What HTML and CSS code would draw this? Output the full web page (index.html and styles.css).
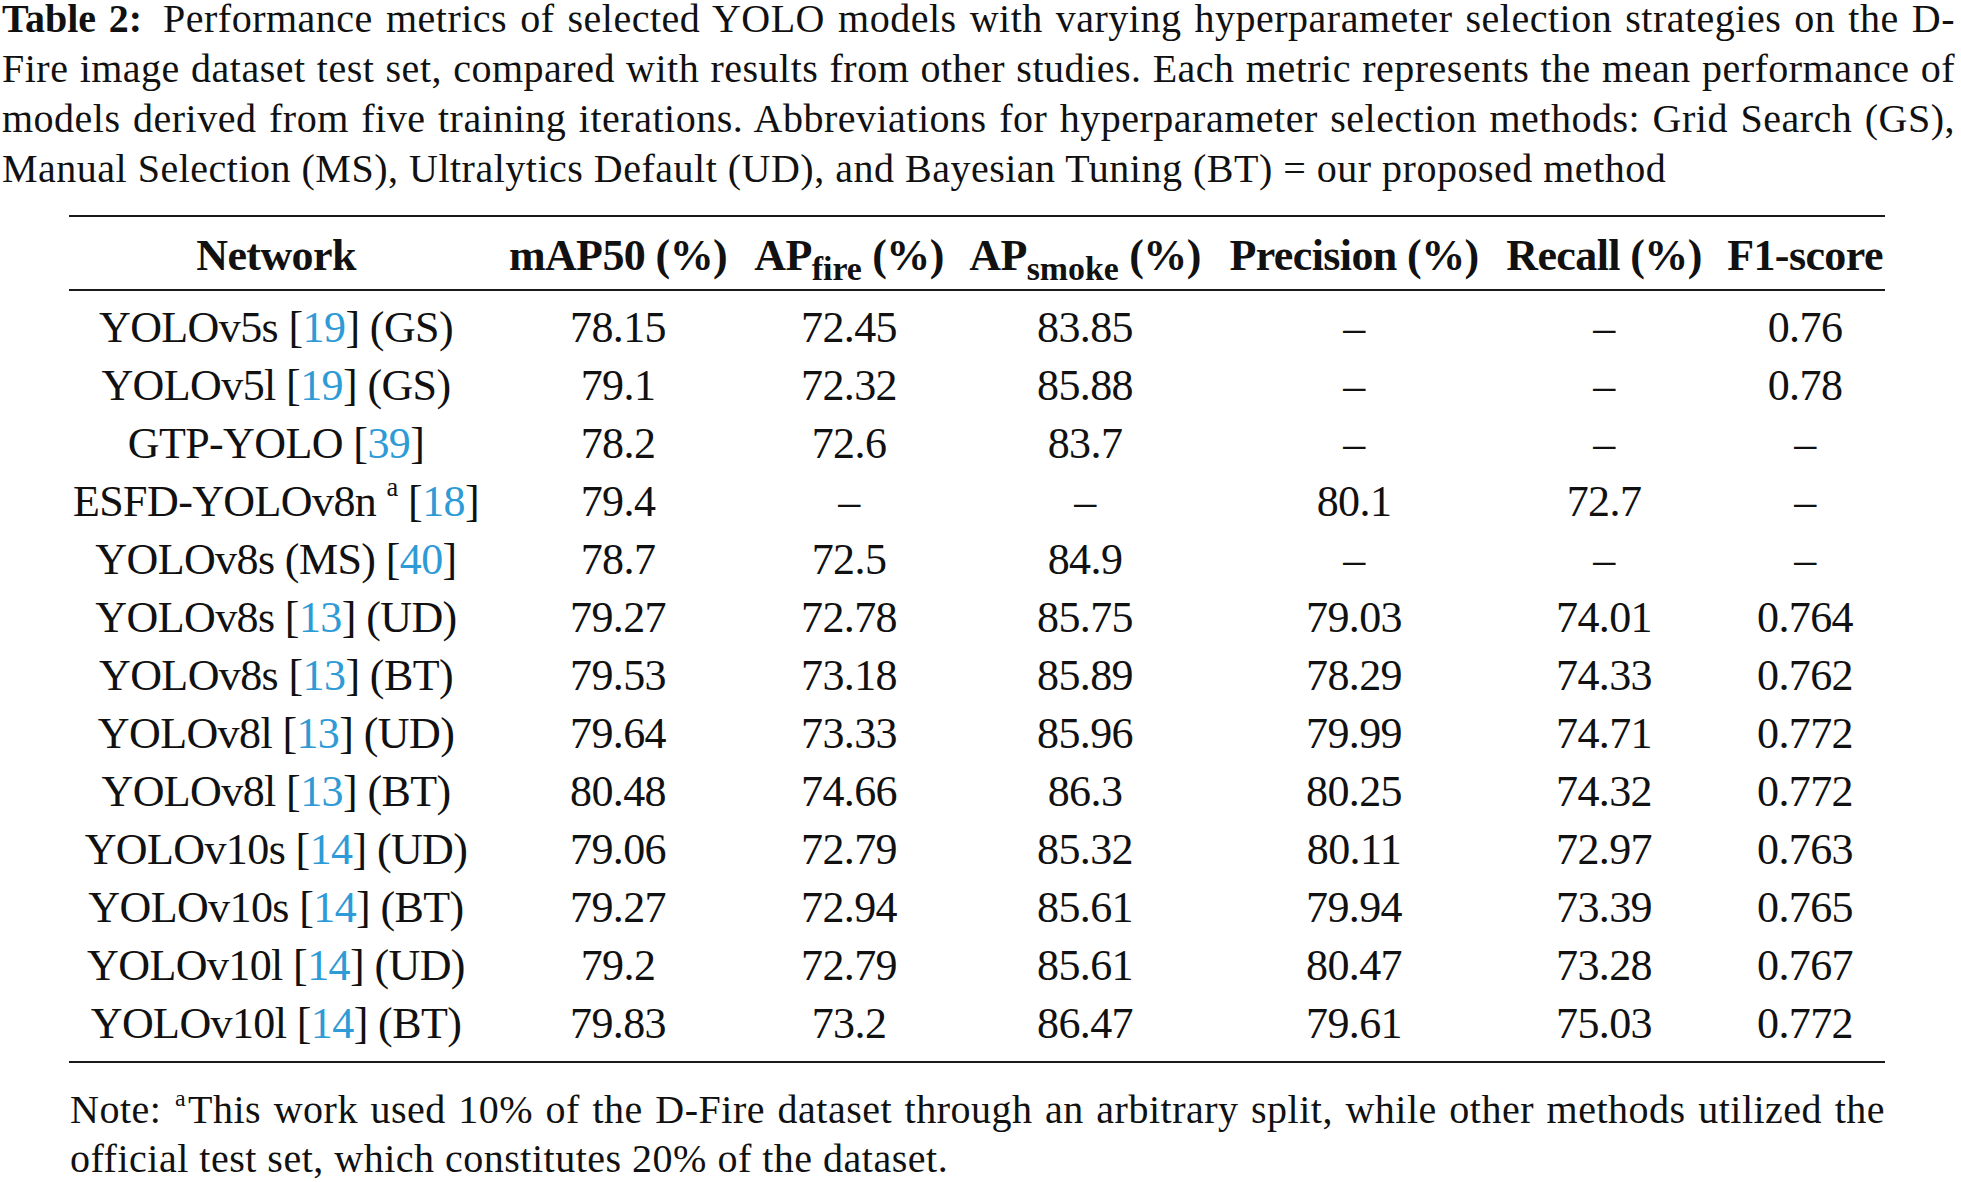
FILE: index.html
```html
<!DOCTYPE html>
<html lang="en">
<head>
<meta charset="utf-8">
<title>Table 2</title>
<link rel="stylesheet" href="styles.css">
</head>
<body>
<div class="page">
  <div class="caption">
    <span class="cap-line first"><b class="label">Table 2:</b> Performance metrics of selected YOLO models with varying hyperparameter selection strategies on the D-</span>
    <span class="cap-line">Fire image dataset test set, compared with results from other studies. Each metric represents the mean performance of</span>
    <span class="cap-line">models derived from five training iterations. Abbreviations for hyperparameter selection methods: Grid Search (GS),</span>
    <span class="cap-line last">Manual Selection (MS), Ultralytics Default (UD), and Bayesian Tuning (BT) = our proposed method</span>
  </div>

  <div class="table-wrap">
    <table class="metrics">
      <colgroup>
        <col class="c-net">
        <col class="c-map">
        <col class="c-fire">
        <col class="c-smoke">
        <col class="c-prec">
        <col class="c-rec">
        <col class="c-f1">
      </colgroup>
      <thead>
        <tr>
          <th>Network</th>
          <th>mAP50 (%)</th>
          <th>AP<sub>fire</sub> (%)</th>
          <th>AP<sub>smoke</sub> (%)</th>
          <th>Precision (%)</th>
          <th>Recall (%)</th>
          <th>F1-score</th>
        </tr>
      </thead>
      <tbody>
        <tr><td>YOLOv5s [<a class="ref">19</a>] (GS)</td><td>78.15</td><td>72.45</td><td>83.85</td><td>–</td><td>–</td><td>0.76</td></tr>
        <tr><td>YOLOv5l [<a class="ref">19</a>] (GS)</td><td>79.1</td><td>72.32</td><td>85.88</td><td>–</td><td>–</td><td>0.78</td></tr>
        <tr><td>GTP-YOLO [<a class="ref">39</a>]</td><td>78.2</td><td>72.6</td><td>83.7</td><td>–</td><td>–</td><td>–</td></tr>
        <tr><td>ESFD-YOLOv8n <sup class="fn">a</sup> [<a class="ref">18</a>]</td><td>79.4</td><td>–</td><td>–</td><td>80.1</td><td>72.7</td><td>–</td></tr>
        <tr><td>YOLOv8s (MS) [<a class="ref">40</a>]</td><td>78.7</td><td>72.5</td><td>84.9</td><td>–</td><td>–</td><td>–</td></tr>
        <tr><td>YOLOv8s [<a class="ref">13</a>] (UD)</td><td>79.27</td><td>72.78</td><td>85.75</td><td>79.03</td><td>74.01</td><td>0.764</td></tr>
        <tr><td>YOLOv8s [<a class="ref">13</a>] (BT)</td><td>79.53</td><td>73.18</td><td>85.89</td><td>78.29</td><td>74.33</td><td>0.762</td></tr>
        <tr><td>YOLOv8l [<a class="ref">13</a>] (UD)</td><td>79.64</td><td>73.33</td><td>85.96</td><td>79.99</td><td>74.71</td><td>0.772</td></tr>
        <tr><td>YOLOv8l [<a class="ref">13</a>] (BT)</td><td>80.48</td><td>74.66</td><td>86.3</td><td>80.25</td><td>74.32</td><td>0.772</td></tr>
        <tr><td>YOLOv10s [<a class="ref">14</a>] (UD)</td><td>79.06</td><td>72.79</td><td>85.32</td><td>80.11</td><td>72.97</td><td>0.763</td></tr>
        <tr><td>YOLOv10s [<a class="ref">14</a>] (BT)</td><td>79.27</td><td>72.94</td><td>85.61</td><td>79.94</td><td>73.39</td><td>0.765</td></tr>
        <tr><td>YOLOv10l [<a class="ref">14</a>] (UD)</td><td>79.2</td><td>72.79</td><td>85.61</td><td>80.47</td><td>73.28</td><td>0.767</td></tr>
        <tr><td>YOLOv10l [<a class="ref">14</a>] (BT)</td><td>79.83</td><td>73.2</td><td>86.47</td><td>79.61</td><td>75.03</td><td>0.772</td></tr>
      </tbody>
    </table>

    <p class="note">Note: <sup class="fn-note">a</sup>This work used 10% of the D-Fire dataset through an arbitrary split, while other methods utilized the official test set, which constitutes 20% of the dataset.</p>
  </div>
</div>
</body>
</html>
```

FILE: styles.css
```css
html, body {
  margin: 0;
  padding: 0;
  background: #ffffff;
}

body {
  font-family: "Liberation Serif", "Times New Roman", serif;
  color: #111111;
}

.page {
  width: 1961px;
  height: 1182px;
  overflow: hidden;
}

/* ---------- caption ---------- */
.caption {
  margin: 0 6px 0 2px;
  font-size: 40px;
  line-height: 50px;
  letter-spacing: 0.5px;
}

.cap-line {
  display: block;
  text-align: justify;
  text-align-last: justify;
  white-space: nowrap;
}

.cap-line.first {
  line-height: 38px;
  margin-bottom: 6px;
}

.cap-line.last {
  text-align: left;
  text-align-last: left;
}

.label {
  font-weight: 700;
  letter-spacing: 0;
  margin-right: 8px;
}

/* ---------- table ---------- */
.table-wrap {
  margin: 21px 0 0 69px;
  width: 1816px;
}

.metrics {
  width: 1816px;
  table-layout: fixed;
  border-collapse: collapse;
  font-size: 44px;
  line-height: 58px;
  letter-spacing: -0.6px;
}

.c-net   { width: 414px; }
.c-map   { width: 270px; }
.c-fire  { width: 192px; }
.c-smoke { width: 280px; }
.c-prec  { width: 258px; }
.c-rec   { width: 242px; }
.c-f1    { width: 160px; }

.metrics th,
.metrics td {
  padding: 0;
  text-align: center;
  white-space: nowrap;
  vertical-align: baseline;
}

.metrics thead th {
  font-weight: 700;
  padding-top: 10px;
  padding-bottom: 4px;
  border-top: 2px solid #1a1a1a;
  border-bottom: 2px solid #1a1a1a;
}

.metrics thead sub {
  font-size: 0.77em;
  line-height: 0;
  vertical-align: baseline;
  position: relative;
  top: 0.3em;
  letter-spacing: 0;
}

.metrics tbody tr:first-child td {
  padding-top: 8px;
}

.metrics tbody tr:last-child td {
  padding-bottom: 8px;
  border-bottom: 2px solid #1a1a1a;
}

.ref {
  color: #2e9bd6;
  text-decoration: none;
}

.fn {
  font-size: 0.6em;
  line-height: 0;
  vertical-align: 0.75em;
}

/* ---------- note ---------- */
.note {
  margin: 22px 0 0 1px;
  font-size: 40px;
  line-height: 49px;
  letter-spacing: 0.5px;
  text-align: justify;
}

.fn-note {
  font-size: 0.6em;
  line-height: 0;
  vertical-align: 0.7em;
  margin: 0 2px 0 1px;
}
```
